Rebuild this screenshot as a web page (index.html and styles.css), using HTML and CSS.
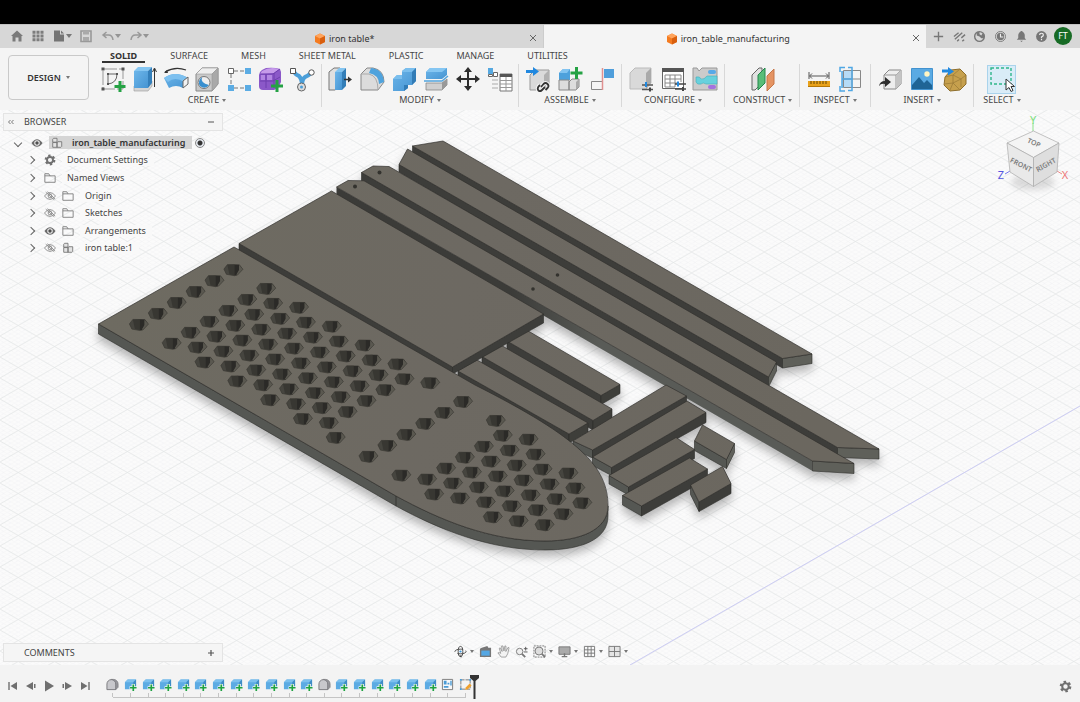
FILE: index.html
```html
<!DOCTYPE html>
<html lang="en">
<head>
<meta charset="utf-8">
<title>iron_table_manufacturing</title>
<link rel="stylesheet" href="styles.css">
</head>
<body>
<svg class="defs" aria-hidden="true">
  <defs>
    <linearGradient id="gBlue" x1="0" y1="0" x2="1" y2="1"><stop offset="0" stop-color="#6db6ea"/><stop offset="1" stop-color="#4594d2"/></linearGradient>
    <symbol id="cube" viewBox="0 0 12 12"><path d="M6 .5 11 3v6L6 11.500 1 9V3z" fill="#f47b20"/><path d="M6 .5 11 3 6 5.500 1 3z" fill="#ffa45c"/><path d="M6 5.500 11 3v6l-5 2.500z" fill="#d95f0e"/></symbol>
    <symbol id="body" viewBox="0 0 14 14"><path d="M1 12V4.500L4 1.500h9V9l-3 3z" fill="#5cabe3"/><path d="M1 4.500l3-3h9l-3 3z" fill="#7cc0ee"/><path d="M10 4.500l3-3V9l-3 3z" fill="#3f8cc6"/><path d="M10 6.500v7.500M6 10.500h8" stroke="#f4f4f4" stroke-width="3.500"/><path d="M10 7v7M6.500 10.500h7" stroke="#1fa342" stroke-width="1.800"/></symbol>
    <symbol id="base" viewBox="0 0 14 14"><path d="M5.500 1.500h2.500a5 5 0 0 1 5 5v3.500l-2.500 2.500z" fill="#99999e" stroke="#77777b" stroke-width=".8"/><path d="M1 12.500V6.500a4.700 4.700 0 0 1 9.500 0v6z" fill="#c8c8cc" stroke="#77777b"/></symbol>
    <symbol id="eye" viewBox="0 0 14 12"><path d="M.5 6q6.500-9 13 0-6.500 9-13 0z" fill="#6b6b6b"/><circle cx="7" cy="6" r="3.200" fill="#eee"/><circle cx="7" cy="6" r="2" fill="#505050"/></symbol>
    <symbol id="eye-off" viewBox="0 0 14 12"><path d="M.5 6q6.500-8 13 0-6.500 8-13 0zM2 1.500l10 9M4 1l9 8.500" fill="none" stroke="#858585"/><circle cx="7" cy="6" r="2.200" fill="none" stroke="#858585"/></symbol>
    <symbol id="folder" viewBox="0 0 14 12"><path d="M1 11V1h4.500l1.500 2.500H13V11zM1 3.500h6" fill="none" stroke="#777"/></symbol>
    <symbol id="component" viewBox="0 0 14 14"><path d="M2 2.500 3 1.500h4v4.500H2zM2 6.500h5V12H2zM7 7l1-1.500h4.500V11l-1 1H7z" fill="#e3e3e3" stroke="#747474"/></symbol>
    <symbol id="gear" viewBox="0 0 14 14"><circle cx="7" cy="7" r="5" fill="none" stroke="#707070" stroke-width="2.600" stroke-dasharray="2.620 2.620"/><circle cx="7" cy="7" r="3.500" fill="none" stroke="#707070" stroke-width="2.200"/></symbol>
  </defs>
</svg>
<div class="screen-edge"></div>
<div class="app">
  <header class="titlebar">
    <div class="quick">
      <button aria-label="Home"><svg viewBox="0 0 14 14"><path d="M1 7 7 1.500 13 7h-1.500v5.500h-3V8.500h-3v4h-3V7z" fill="#7a7a7a"/></svg></button>
      <button aria-label="Data panel"><svg viewBox="0 0 14 14"><path d="M1.500 3.200h3m1 0h3m1 0h3M1.500 7h3m1 0h3m1 0h3M1.500 10.800h3m1 0h3m1 0h3" stroke="#7d7d7d" stroke-width="3"/></svg></button>
      <button class="has-caret" aria-label="File"><svg viewBox="0 0 14 14"><path d="M2 1.500h6v4h4v7H2z" fill="#747474"/><path d="M9 1.500 12 4.500H9z" fill="#747474"/></svg></button>
      <button aria-label="Save"><svg viewBox="0 0 14 14"><path d="M2 2h10v10.500H2z" fill="none" stroke="#999" stroke-width="1.600"/><path d="M4 2h6v3.500H4zM4 8h6v4H4z" fill="#aaa"/></svg></button>
      <button class="has-caret light" aria-label="Undo"><svg viewBox="0 0 14 14"><path d="M5.500 3 2 6l3.500 3M2 6h5.500q4 0 4.500 5" fill="none" stroke="#999" stroke-width="1.500"/></svg></button>
      <button class="has-caret light" aria-label="Redo"><svg viewBox="0 0 14 14"><path d="M8.500 3 12 6 8.500 9M12 6H6.500Q2.500 6 2 11" fill="none" stroke="#999" stroke-width="1.500"/></svg></button>
    </div>
    <div class="doc"><span class="doc-title"><svg><use href="#cube"/></svg>iron table*</span><button class="close" aria-label="Close iron table"><svg viewBox="0 0 8 8"><path d="M1 1l6 6M7 1 1 7" stroke="#666"/></svg></button></div>
    <div class="doc active"><span class="doc-title"><svg><use href="#cube"/></svg>iron_table_manufacturing</span><button class="close" aria-label="Close iron_table_manufacturing"><svg viewBox="0 0 8 8"><path d="M1 1l6 6M7 1 1 7" stroke="#666"/></svg></button></div>
    <div class="account">
      <button aria-label="New tab"><svg viewBox="0 0 14 14"><path d="M7 2v10M2 7h10" stroke="#777" stroke-width="1.500"/></svg></button>
      <button aria-label="Connection"><svg viewBox="0 0 14 14"><path d="M1 7l5-4M2 10l8-7M4.500 12l2-1.700M9 8.500l4-3.500M10 12l2-1.500" stroke="#777" stroke-width="1.500"/></svg></button>
      <button aria-label="Extensions"><svg viewBox="0 0 14 14"><circle cx="7" cy="7" r="5.200" fill="none" stroke="#777" stroke-width="1.500"/><path d="M4 2h3v2.500l2 1.500 1-2 2.500 1L12 9H9L7 7 4 6z" fill="#777"/></svg></button>
      <button aria-label="Job status"><svg viewBox="0 0 14 14"><circle cx="7" cy="7" r="5.400" fill="#ddd" stroke="#777"/><circle cx="7" cy="7" r="4" fill="#777"/><path d="M7 4v3.500h3" fill="none" stroke="#eee" stroke-width="1.200"/></svg></button>
      <button aria-label="Notifications"><svg viewBox="0 0 14 14"><path d="M2 10.500 3.500 8.500V5Q4 2.500 6 2V1h2v1q2 .5 2.500 3v3.500L12 10.500zM5.500 11.500h3L7 13z" fill="#777"/></svg></button>
      <button aria-label="Help"><svg viewBox="0 0 14 14"><circle cx="7" cy="7" r="5.800" fill="#757575"/><path d="M5 5.500Q5 3.500 7 3.500t2 1.800Q9 6.500 7 7.500V8.500M7 9.500V11" fill="none" stroke="#eee" stroke-width="1.300"/></svg></button>
      <button class="avatar">FT</button>
    </div>
  </header>

  <section class="ribbon">
    <button class="workspace caret">DESIGN</button>
    <div class="ribbon-main">
      <nav class="tabs">
        <button class="current">SOLID</button><button>SURFACE</button><button>MESH</button><button>SHEET METAL</button><button>PLASTIC</button><button>MANAGE</button><button>UTILITIES</button>
      </nav>
      <div class="groups">
        <div class="group create">
          <div class="icons">
            <button aria-label="Create sketch"><svg viewBox="0 0 26 26"><path d="M3 3h20v20H3z" fill="none" stroke="#999" stroke-dasharray="14 2"/><path d="M8 8h9q0 9-9 10z" fill="none" stroke="#666"/><path d="M1.500 1.500h3v3h-3zM21.500 1.500h3v3h-3zM1.500 21.500h3v3h-3zM7 7h2v2H7zM16 7h2v2h-2zM7 17h2v2H7z" fill="#555"/><path d="M20 15v11M14.500 20.500h11" stroke="#25a244" stroke-width="3"/></svg></button>
            <button aria-label="Extrude"><svg viewBox="0 0 26 26"><path d="M3 20h14l4-5v5l-4 5H3z" fill="#d5d5d5" stroke="#999" stroke-width=".6"/><path d="M3 5h14v17H3z" fill="url(#gBlue)"/><path d="M3 5l4-4h14l-4 4z" fill="#85c6f2"/><path d="M17 5l4-4v16l-4 5z" fill="#347fba"/><path d="M23.500 21V3M21.500 6l2-4 2 4" fill="none" stroke="#333"/></svg></button>
            <button aria-label="Revolve"><svg viewBox="0 0 26 26"><path d="M2 6Q12 0 23 4" fill="none" stroke="#333" stroke-width="1.200"/><path d="M1 7l3-3 1 3z" fill="#333"/><path d="M1 12q11-8 24 0l-5 10q-7-4-14 0z" fill="url(#gBlue)"/><path d="M1 12q11-8 24 0l-4 4q-9-6-16 0z" fill="#7dc0ef"/><path d="M25 11v7l-5 4v-7z" fill="#f2f2f2" stroke="#666"/></svg></button>
            <button aria-label="Hole"><svg viewBox="0 0 26 26"><path d="M2 25V8l6-6h16v16l-6 7z" fill="#c9c9c9" stroke="#888"/><path d="M2 8l6-6h16l-6 6z" fill="#eee" stroke="#999" stroke-width=".6"/><path d="M18 8l6-6v16l-6 7z" fill="#a9a9a9" stroke="#999" stroke-width=".6"/><circle cx="10" cy="16.500" r="6" fill="#eee" stroke="#777"/><path d="M8 11q-2 6 7 8-4 5-9 1-3-5 2-9z" fill="#388fcf"/></svg></button>
            <button aria-label="Rectangular pattern"><svg viewBox="0 0 26 26"><path d="M8 5h11M5 8v11M8 22h11" fill="none" stroke="#777" stroke-dasharray="4 2"/><path d="M2.500 2.500h5v5h-5z" fill="#fff" stroke="#666"/><path d="M19 2h6v6h-6zM2 19h6v6H2zM19 19h6v6h-6z" fill="#5bace4"/></svg></button>
            <button aria-label="Create form"><svg viewBox="0 0 26 26"><path d="M2 9q0-3 3-5l4-2q8-1 14 1l1 3v10l-3 6-4 2H6q-4 0-4-4z" fill="#8b58c8"/><path d="M5 5q8-5 17-2l-5 4Q9 8 3 8z" fill="#c69bea"/><path d="M3 8h13l7-5M3 15h13l7-4M9 8v14M17 7v15" stroke="#6f3fae" fill="none"/><path d="M4 9h4v5H4zM10 9h5v5h-5z" fill="#b286e2"/><path d="M20 14v12M14 20h12" stroke="#25a244" stroke-width="3"/></svg></button>
            <button aria-label="Automated modeling"><svg viewBox="0 0 26 26"><path d="M4 5q3 4 6 5 3 3 3 10 0-7 3-9 3-1 6-4" fill="none" stroke="#4b9fd9" stroke-width="4"/><path d="M1.500 2.500h5v5h-5z" fill="#fff" stroke="#555"/><circle cx="22.500" cy="6.500" r="2.700" fill="#fff" stroke="#555"/><circle cx="12.500" cy="21" r="4" fill="#ddd" stroke="#666"/><circle cx="12.500" cy="21" r="1.500" fill="#4b9fd9"/></svg></button>
          </div>
          <button class="caret">CREATE</button>
        </div>
        <div class="group modify">
          <div class="icons">
            <button aria-label="Press pull"><svg viewBox="0 0 26 26"><path d="M2 24V6l5-4h6v18l-5 4z" fill="#e0e0e0" stroke="#777"/><path d="M8 6h7v18H8z" fill="url(#gBlue)"/><path d="M8 6l4-4h7l-4 4z" fill="#83c5f1"/><path d="M15 6l4-4v18l-4 4z" fill="#337eb8"/><path d="M17 13.500h5" stroke="#333" stroke-width="1.500"/><path d="M21 10.500l4 3-4 3z" fill="#333"/></svg></button>
            <button aria-label="Fillet"><svg viewBox="0 0 26 26"><path d="M2 24V8l6-6h6q11 2 11 14l-6 8z" fill="#dcdcdc" stroke="#888"/><path d="M2 8h8q9 2 9 16" fill="none" stroke="#aaa"/><path d="M12 2q12 1 13 14l-5 2Q20 9 10 7z" fill="#4fa3dd"/></svg></button>
            <button aria-label="Combine"><svg viewBox="0 0 26 26"><path d="M2 25V13l4-4h5V5l4-3h10v13l-4 4h-4v3l-4 3z" fill="url(#gBlue)"/><path d="M2 13l4-4h5v-4l4-3h10l-4 4H11v7z" fill="#7abeed"/><path d="M21 6l4-4v13l-4 4zM13 19h4v3l-4 3z" fill="#327cb6"/></svg></button>
            <button aria-label="Split body"><svg viewBox="0 0 26 26"><path d="M3 13V6l4-4h17v7l-5 4z" fill="url(#gBlue)"/><path d="M3 6l4-4h17l-5 4z" fill="#85c6f2"/><path d="M1 15h18l6-5" fill="none" stroke="#52a4dd" stroke-width="1.500"/><path d="M3 17h16l5-4v6l-5 5H3z" fill="#d0d0d0" stroke="#888" stroke-width=".8"/><path d="M19 17l5-4v6l-5 5z" fill="#999"/></svg></button>
            <button aria-label="Move"><svg viewBox="0 0 26 26"><path d="M13 4v18M4 13h18" stroke="#2e2e2e" stroke-width="2"/><path d="M13 1l4 5H9zM13 25l4-5H9zM1 13l5-4v8zM25 13l-5-4v8z" fill="#2e2e2e"/></svg></button>
            <button aria-label="Change parameters"><svg viewBox="0 0 26 26"><path d="M1 2h5v6H1z" fill="#55a8e0"/><path d="M6.500 6.500h4v4h-4zM1.500 8.500h4v2h-4z" fill="#fff" stroke="#666"/><path d="M5 14h6M5 18h6M5 22h6" stroke="#aaa"/><path d="M13 8h12v17H13z" fill="#fff" stroke="#777"/><path d="M13 8h12v3H13z" fill="#555"/><path d="M13 14.500h12M13 18h12M13 21.500h12M19 11v14" stroke="#999"/></svg></button>
          </div>
          <button class="caret">MODIFY</button>
        </div>
        <div class="group">
          <div class="icons">
            <button aria-label="Insert derive"><svg viewBox="0 0 26 26"><path d="M5 24V9l5-5h14v14l-5 6z" fill="#dadada" stroke="#999"/><path d="M19 9l5-5v14l-5 6z" fill="#b1b1b1"/><path d="M1 5.500h8" stroke="#2188df" stroke-width="3"/><path d="M8 1l6 4.500L8 10z" fill="#2188df"/><path d="M16 21l2.500-3q2-2 4 0t0 4l-2 2M20 21l-3 3q-2 2-3.500.500t0-4l1.500-1.500" fill="none" stroke="#f4f4f4" stroke-width="4"/><path d="M16 21l2.500-3q2-2 4 0t0 4l-2 2M20 21l-3 3q-2 2-3.500.500t0-4l1.500-1.500" fill="none" stroke="#333" stroke-width="1.800"/></svg></button>
            <button aria-label="New component"><svg viewBox="0 0 26 26"><path d="M2 14V7l4-4h7v11z" fill="#4da1dc"/><path d="M2 7l4-4h7l-3 4z" fill="#82c4f1"/><path d="M2 14h10v10H2zM12 16l3-3h7v8l-3 3h-7z" fill="#ddd" stroke="#888"/><path d="M19 16l3-3v8l-3 3z" fill="#aaa"/><path d="M19.500 1v12M13.500 7h12" stroke="#25a244" stroke-width="3"/></svg></button>
            <button aria-label="Joint"><svg viewBox="0 0 26 26"><path d="M2.500 15.500h11v8h-11z" fill="#f5f5f5" stroke="#888"/><path d="M15 3h10v9H15z" fill="#4f9edb"/><path d="M13.500 2v22" stroke="#e09090" stroke-width="1.500"/></svg></button>
          </div>
          <button class="caret">ASSEMBLE</button>
        </div>
        <div class="group">
          <div class="icons">
            <button aria-label="Configure model"><svg viewBox="0 0 26 26"><path d="M2 23V7l5-5h16v15l-5 6z" fill="#d9d9d9" stroke="#bbb"/><path d="M18 7l5-5v15l-5 6z" fill="#aaa"/><path d="M14 19h11M14 23.500h11" stroke="#555" stroke-width="1.300"/><path d="M18 16v5" stroke="#2188df" stroke-width="2"/><path d="M22 21.500v4" stroke="#444" stroke-width="2"/></svg></button>
            <button aria-label="Configuration table"><svg viewBox="0 0 26 26"><path d="M2.500 2.500h21v20h-21z" fill="#fff" stroke="#666"/><path d="M2 2h22v4H2z" fill="#555"/><path d="M5 9h16M5 13h16M5 17h12M5 21h10M5 9v12M10 9v12M15 9v12M21 9v7" stroke="#888"/><path d="M15 18h11M15 23h11" stroke="#444" stroke-width="1.300"/><path d="M18 15.500v5" stroke="#2188df" stroke-width="2"/><path d="M23 21v4" stroke="#444" stroke-width="2"/></svg></button>
            <button aria-label="Configuration rules"><svg viewBox="0 0 26 26"><path d="M1 2h4l2 3 3-3h15v22H1z" fill="#cbcbcb" stroke="#999"/><path d="M4 11q4-1 5 2 3 1 6-3h10v8H14q-3-2-5 0-4 1-5-2z" fill="#67d1dd" stroke="#45aeba" stroke-width=".6"/><rect x="16" y="4" width="8" height="4" rx="2" fill="#57a9e8"/><rect x="16" y="19" width="8" height="4" rx="2" fill="#a473df"/></svg></button>
          </div>
          <button class="caret">CONFIGURE</button>
        </div>
        <div class="group construct">
          <div class="icons">
            <button aria-label="Offset plane"><svg viewBox="0 0 26 26"><path d="M2 24V9l7-7h3v15l-7 7z" fill="#e1e1e1" stroke="#666"/><path d="M8 9l7-7v15l-7 7z" fill="#58bd78" stroke="#23864b"/><path d="M17 10l7-7v15l-7 7z" fill="#e59463" stroke="#c57748"/></svg></button>
          </div>
          <button class="caret">CONSTRUCT</button>
        </div>
        <div class="group">
          <div class="icons">
            <button aria-label="Measure"><svg viewBox="0 0 26 26"><path d="M3 6v7M23 6v7M4 10h18M6 7.500 3.500 10 6 12.500M20 7.500l2.500 2.500-2.500 2.500" fill="none" stroke="#555"/><path d="M2 15h22v6H2z" fill="#e9a21b"/><path d="M5 15v3M8 15v3M11 15v3M14 15v3M17 15v3M20 15v3" stroke="#674600"/><path d="M2 20.500h22" stroke="#b67705"/></svg></button>
            <button aria-label="Section analysis"><svg viewBox="0 0 26 26"><path d="M4 5h9v17H4z" fill="#b6dbf6"/><path d="M5.500 4.500h17v17h-17zM5 13h18M14 4v18" fill="none" stroke="#888"/><path d="M7 1.500H2V6M2 20v5h5M10 1.500h4v23h-4M4 13h10M4 5v17" fill="none" stroke="#4fa7e4" stroke-width="1.500"/></svg></button>
          </div>
          <button class="caret">INSPECT</button>
        </div>
        <div class="group">
          <div class="icons">
            <button aria-label="Insert component"><svg viewBox="0 0 26 26"><path d="M7 23V9l5-5h12v14l-5 5z" fill="#eee" stroke="#888"/><path d="M7 9h12v14M19 9l5-5" fill="none" stroke="#999"/><path d="M19 9l5-5v14l-5 5z" fill="#c4c4c4"/><path d="M2 20q1-5 6-5v-4l6 5-6 5v-3q-4-1-6 2z" fill="#2e2e2e"/></svg></button>
            <button aria-label="Insert image"><svg viewBox="0 0 26 26"><path d="M2.500 2.500h21v21h-21z" fill="#5aaae3" stroke="#4292cf"/><path d="M3 19l7-8 5 6 3-3 5 5v4H3z" fill="#1f6495"/><circle cx="18" cy="8" r="2.700" fill="#fff5c3"/></svg></button>
            <button aria-label="Insert mesh"><svg viewBox="0 0 26 26"><path d="M4 11l6-7 9-1 6 6v9l-6 6-10 1-6-6z" fill="#c6a04d" stroke="#8d6d2b"/><path d="M4 11l8-2 7-6M12 9l8 4 5-4M12 9v8l8-4v8M3 18l9-1 7 7M12 17l-3 7" fill="none" stroke="#9d7c38" stroke-width=".8"/><path d="M1 5h7" stroke="#2188df" stroke-width="3"/><path d="M7 1l6 4.500-6 4z" fill="#2188df"/></svg></button>
          </div>
          <button class="caret">INSERT</button>
        </div>
        <div class="group select">
          <div class="icons">
            <button class="pressed" aria-label="Select"><svg viewBox="0 0 26 26"><path d="M2 2h20v16H2z" fill="none" stroke="#2fb68b" stroke-width="1.400" stroke-dasharray="3 2"/><path d="M17 13v11l3-2.500 2 4 2-1-2-4h3.500z" fill="#fff" stroke="#333"/></svg></button>
          </div>
          <button class="caret">SELECT</button>
        </div>
      </div>
    </div>
  </section>

  <main class="canvas">
    <svg class="scene" viewBox="0 110 1080 555" preserveAspectRatio="xMidYMid slice" role="img" aria-label="Flat arrangement of table parts">
      <defs>
        <pattern id="minor" width="7.280" height="4.200" patternUnits="userSpaceOnUse"><path d="M0 0l7.280 4.200M0 4.200 7.280 0" stroke="#f1f1f2" stroke-width=".5"/></pattern>
        <pattern id="major" width="36.400" height="21" patternUnits="userSpaceOnUse"><path d="M0 0l36.400 21M0 21 36.400 0" stroke="#e3e5e6" stroke-width=".7"/></pattern>
        <linearGradient id="edgeA" gradientUnits="userSpaceOnUse" x1="510" y1="0" x2="600" y2="0"><stop offset="0" stop-color="#3b3b38"/><stop offset="1" stop-color="#595b57"/></linearGradient>
        <linearGradient id="topFace" gradientUnits="userSpaceOnUse" x1="100" y1="250" x2="800" y2="450"><stop offset="0" stop-color="#6e6b61"/><stop offset=".5" stop-color="#6d6962"/><stop offset="1" stop-color="#6b675f"/></linearGradient>
        <g id="hole"><path d="M-9.500-1-6-5.500 6-5.300 9.500-.8 4 5 1 5.600-7 4.200z" fill="#46453f" stroke="#35342f" stroke-width=".6"/><path d="M-6-5.200 1-5.600v10.800l-5-1z" fill="#383732"/><path d="M1-5.400 5.600-5.200V.8L3 5 1 5.200z" fill="#2b2a27"/><path d="M5.600-5 9.200-.8 4 4.700 3 4.500 5.600 0z" fill="#5a5850"/></g>
      </defs>
      <rect y="100" width="1080" height="575" fill="#fbfbfb"/>
      <rect y="100" width="1080" height="575" fill="url(#minor)"/>
      <rect y="100" width="1080" height="575" fill="url(#major)"/>
      <path d="M630 665 1080 406" stroke="#cdcdf4" fill="none"/>
      <g class="parts">
        <g class="beam">
          <path class="dark" d="M412.500 146 782.500 358.500v9.500L412.500 155z"/><path class="end" d="M782.500 358.500 812 354v9.500l-29.500 4.500z"/><path class="top" d="M412.500 146 443 141 812 354l-29.500 4.500z"/>
          <path class="dark" d="M399 164.500 768.500 377v10L399 172z"/><path class="end" d="M768.500 377l8-15v9l-8 16z"/><path class="top" d="M399 164.500 407.500 149l369 213-8 15z"/>
          <path class="dark" d="M361.500 172.500 837.500 447.500v9.500L361.500 182z"/><path class="end" d="M837.500 447.500l41.500 1.500v10l-41.500-1.500z"/><path class="top" d="M361.500 172.500 373 166l16 .5L879 449l-41.500-1.500z"/>
          <path fill="url(#edgeA)" d="M336.500 187 812.500 461v10L336.500 196z"/><path class="end" d="M812.500 461l41.500 2.500v10L812.500 471z"/><path class="top" d="M336.500 187 348 180.500l16 .3L854 463.500 812.500 461z"/>
        </g>
        <g>
          <path class="dark" d="M507 341l94 54.500v9L507 350z"/><path class="side" d="M601 395.500l19-11v9l-19 11z"/><path class="top" d="M507 341l19.500-11L620 384.500l-19 11z"/>
          <path class="dark" d="M482 356.500l111 64v9.500L482 366z"/><path class="side" d="M593 420.500l19-11.500v9l-19 12z"/><path class="top" d="M482 356.500 501.500 345.500 612 409l-19 11.500z"/>
          <path class="dark" d="M458 371l111 63v9L458 379z"/><path class="side" d="M569 434l19-11v9l-19 11z"/><path class="top" d="M458 371l19-11L588 423l-19 11z"/>
          <path class="front" d="M573 441l19.500 9v8L573 449z"/><path class="dark" d="M592.500 450l94-54v8l-94 54z"/><path class="top" d="M573 441l93-56 20.500 11-94 54z"/>
          <path class="front" d="M592.500 457l19 10.500v8l-19-10z"/><path class="dark" d="M611.500 467.500 706 412.500v10l-94.500 53z"/><path class="top" d="M592.500 457 687 401l19 11.500-94.500 55z"/>
          <path class="front" d="M609 475.500 628.500 487v8L609 484z"/><path class="dark" d="M628.500 487l66-37.500v9l-66 36.500z"/><path class="top" d="M609 475.500 676 437.500l18.500 12-66 37.500z"/>
          <path class="front" d="M622.500 495.500 641.500 506v10l-19-11z"/><path class="dark" d="M641.500 506l66-37v10l-66 37z"/><path class="top" d="M622.500 495.500 689.500 458l18 11-66 37z"/>
          <path class="front" d="M694.500 441l32 18.500v9l-32-18z"/><path class="end" d="M726.500 459.500l8-16v9l-8 16z"/><path class="top" d="M702.500 425l32 18.500-8 16-32-18.500z"/>
          <path class="front" d="M690.500 485l8.500 17v9.500l-8.500-17z"/><path class="dark" d="M699 502l32-18.500v10L699 511.500z"/><path class="top" d="M722.500 466.500l8.500 17L699 502l-8.500-17z"/>
        </g>
        <path class="dark" d="M239 243.500 452.500 367v7L239 251z"/><path class="dark" d="M452.500 367l91-53v9l-91 51z"/><path class="top" d="M239 243.500 331.500 191l212 123-91 53z"/>
        <path class="front" d="M98.500 324 396 496C440 520 490 541 545 541 580 541 608 530 608 506v10C608 540 580 550 545 550 490 550 440 530 396 506L98.500 334z"/>
        <path class="top" d="M98.500 324 234 247 475 385C580 438 608 467 608 506 608 530 580 541 545 541 490 541 440 520 396 496z"/>
        <path d="M396 496v10" stroke="#2d2d2b" stroke-width=".8"/>
        <g fill="#33322e"><circle cx="355" cy="186.500" r="2"/><circle cx="379.500" cy="172.500" r="2"/><circle cx="533" cy="289" r="1.800"/><circle cx="557.500" cy="275" r="1.800"/></g>
        <g id="holes"></g>
      </g>
    </svg>

    <aside class="browser">
      <h2 class="panel-head"><button aria-label="Collapse browser"><svg viewBox="0 0 8 8"><path d="M3.500 2 1.500 4l2 2M6.500 2l-2 2 2 2" fill="none" stroke="#777"/></svg></button><span>BROWSER</span><button aria-label="Minimize"><svg viewBox="0 0 8 8"><path d="M1 4h6" stroke="#555"/></svg></button></h2>
      <ul class="tree">
        <li class="root"><button class="chev open" aria-label="Collapse"></button><svg><use href="#eye"/></svg><span class="picked"><svg><use href="#component"/></svg><b>iron_table_manufacturing</b></span><input type="radio" checked aria-label="Activate component"></li>
        <li><button class="chev" aria-label="Expand"></button><svg><use href="#gear"/></svg><span class="label">Document Settings</span></li>
        <li><button class="chev" aria-label="Expand"></button><svg><use href="#folder"/></svg><span class="label">Named Views</span></li>
        <li><button class="chev" aria-label="Expand"></button><svg><use href="#eye-off"/></svg><svg><use href="#folder"/></svg><span class="label">Origin</span></li>
        <li><button class="chev" aria-label="Expand"></button><svg><use href="#eye-off"/></svg><svg><use href="#folder"/></svg><span class="label">Sketches</span></li>
        <li><button class="chev" aria-label="Expand"></button><svg><use href="#eye"/></svg><svg><use href="#folder"/></svg><span class="label">Arrangements</span></li>
        <li><button class="chev" aria-label="Expand"></button><svg><use href="#eye-off"/></svg><svg><use href="#component"/></svg><span class="label">iron table:1</span></li>
      </ul>
    </aside>

    <svg class="viewcube" viewBox="0 0 84 84" role="img" aria-label="View cube">
      <ellipse cx="41" cy="70" rx="22" ry="8" fill="#000" opacity=".12" class="soft"/>
      <path d="M41 19V11" stroke="#8be38b"/><path d="M18 59l-5 3" stroke="#7777ef"/><path d="M65 59l5 3" stroke="#ef8888"/>
      <path d="M15 31 41.500 19 67 31 41.500 45.500z" fill="#f4f4f4" stroke="#aaa" stroke-width=".7"/>
      <path d="M15 31l26.500 14.500v29L18 60z" fill="#e9e9e9" stroke="#aaa" stroke-width=".7"/>
      <path d="M67 31 41.500 45.500v29L65 60z" fill="#dedede" stroke="#aaa" stroke-width=".7"/>
      <g class="face"><text transform="translate(41 33) rotate(24)">TOP</text><text transform="translate(28 55) rotate(27)">FRONT</text><text transform="translate(55 55) rotate(-29)">RIGHT</text></g>
      <g class="axis"><text x="41" y="12" fill="#7be07b">Y</text><text x="9" y="67" fill="#5555e0">Z</text><text x="73" y="67" fill="#ee7777">X</text></g>
    </svg>

    <section class="comments panel-head"><span>COMMENTS</span><button aria-label="Add comment"><svg viewBox="0 0 8 8"><path d="M1 4h6M4 1v6" stroke="#555" stroke-width="1.200"/></svg></button></section>

    <div class="navbar">
      <button class="has-caret" aria-label="Orbit"><svg viewBox="0 0 14 14"><ellipse cx="7" cy="7" rx="2.500" ry="5.500" fill="none" stroke="#444"/><ellipse cx="7" cy="7" rx="6" ry="2.500" fill="none" stroke="#444" stroke-dasharray="10 3"/><path d="M5.500 11.500 8 11v2.500z" fill="#333"/><circle cx="7" cy="7" r="1.200" fill="#3b96dc"/></svg></button>
      <button aria-label="Look at"><svg viewBox="0 0 14 14"><path d="M1 4l2-1 6-2 1 2h3v10H1z" fill="#777"/><path d="M2.500 6h9v5.500h-9z" fill="#54a7e4"/></svg></button>
      <button aria-label="Pan"><svg viewBox="0 0 14 14"><path d="M4.500 13 1 8.500q.5-1 3 .5L2.500 3.500l1-.5L5.500 7 5 1h1.400L7.500 6.500 8.500 1l1.200.2L9.500 7 12 2.500l1 .5L11.500 9.500l-2 3.500z" fill="#f3f3f3" stroke="#8a8a8a" stroke-width=".8"/></svg></button>
      <button aria-label="Zoom"><svg viewBox="0 0 14 14"><circle cx="5" cy="7" r="3.500" fill="#eee" stroke="#777"/><path d="M7.500 9.500 11 13" stroke="#777" stroke-width="2"/><path d="M9.500 4h4M11.500 2v4M9.500 7.500h4" stroke="#555"/></svg></button>
      <button class="has-caret" aria-label="Fit"><svg viewBox="0 0 14 14"><path d="M1 1h12v12H1z" fill="none" stroke="#777" stroke-dasharray="2 1"/><circle cx="6.500" cy="6.500" r="4.300" fill="#ddd" stroke="#777"/><path d="M9.500 9.500 13 13" stroke="#777" stroke-width="1.800"/></svg></button>
      <button class="has-caret" aria-label="Display settings"><svg viewBox="0 0 14 14"><path d="M1 2h12v8H1z" fill="#aaa" stroke="#777"/><path d="M4 12.500h6M7 9v3" stroke="#777" stroke-width="1.500"/></svg></button>
      <button class="has-caret" aria-label="Grid settings"><svg viewBox="0 0 14 14"><path d="M1.500 1.500h11v11h-11zM5.200 1.500v11M8.800 1.500v11M1.500 5.200h11M1.500 8.800h11" fill="none" stroke="#777"/></svg></button>
      <button class="has-caret" aria-label="Viewports"><svg viewBox="0 0 14 14"><path d="M1 1.500h12v11H1zM7 1.500v11M1 7h12" fill="#e4e4e4" stroke="#777"/></svg></button>
    </div>
  </main>

  <footer class="timeline">
    <div class="play">
      <button aria-label="Go to start"><svg viewBox="0 0 12 12"><path d="M2 2v8" stroke="#6f6f6f" stroke-width="1.400"/><path d="M10 2v8L3.500 6z" fill="#6f6f6f"/></svg></button>
      <button aria-label="Step back"><svg viewBox="0 0 12 12"><path d="M8 2v8L1 6zM9 4h1.500v4H9z" fill="#6f6f6f"/></svg></button>
      <button aria-label="Play"><svg viewBox="0 0 12 12"><path d="M2 .5v11L11 6z" fill="#6f6f6f"/></svg></button>
      <button aria-label="Step forward"><svg viewBox="0 0 12 12"><path d="M4 2v8l7-4zM1.500 4H3v4H1.500z" fill="#6f6f6f"/></svg></button>
      <button aria-label="Go to end"><svg viewBox="0 0 12 12"><path d="M10 2v8" stroke="#6f6f6f" stroke-width="1.400"/><path d="M2 2v8l6.500-4z" fill="#6f6f6f"/></svg></button>
    </div>
    <div class="features">
      <button aria-label="Base feature"><svg><use href="#base"/></svg></button>
      <button aria-label="Body 1"><svg><use href="#body"/></svg></button>
      <button aria-label="Body 2"><svg><use href="#body"/></svg></button>
      <button aria-label="Body 3"><svg><use href="#body"/></svg></button>
      <button aria-label="Body 4"><svg><use href="#body"/></svg></button>
      <button aria-label="Body 5"><svg><use href="#body"/></svg></button>
      <button aria-label="Body 6"><svg><use href="#body"/></svg></button>
      <button aria-label="Body 7"><svg><use href="#body"/></svg></button>
      <button aria-label="Body 8"><svg><use href="#body"/></svg></button>
      <button aria-label="Body 9"><svg><use href="#body"/></svg></button>
      <button aria-label="Body 10"><svg><use href="#body"/></svg></button>
      <button aria-label="Body 11"><svg><use href="#body"/></svg></button>
      <button aria-label="Base feature 2"><svg><use href="#base"/></svg></button>
      <button aria-label="Body 12"><svg><use href="#body"/></svg></button>
      <button aria-label="Body 13"><svg><use href="#body"/></svg></button>
      <button aria-label="Body 14"><svg><use href="#body"/></svg></button>
      <button aria-label="Body 15"><svg><use href="#body"/></svg></button>
      <button aria-label="Body 16"><svg><use href="#body"/></svg></button>
      <button aria-label="Body 17"><svg><use href="#body"/></svg></button>
      <button aria-label="Arrange"><svg viewBox="0 0 14 14"><path d="M1.500 1.500h11v11h-11z" fill="#f8f8f8" stroke="#777"/><path d="M3 3h3v4H3zM7 5h2v2H7zM10 3h1.500v5H10zM3 8.500h5v2H3z" fill="#4a9bd5"/></svg></button>
      <button aria-label="Sketch"><svg viewBox="0 0 14 14"><path d="M2 2h10v10H2z" fill="none" stroke="#777" stroke-dasharray="4 1"/><path d="M1 1h2v2H1zM11 1h2v2h-2zM1 11h2v2H1z" fill="#4a9bd5"/><path d="M6.500 13l1-3 4-4 2 2-4 4z" fill="#f0a02c"/></svg></button>
    </div>
    <svg class="marker" viewBox="0 0 9 24"><path d="M0 0h9v3L5.500 6v18h-2V6L0 3z" fill="#333"/></svg>
    <button class="settings" aria-label="Settings"><svg><use href="#gear"/></svg></button>
  </footer>
</div>
<script src="holes.js"></script>
</body>
</html>
```
FILE: styles.css
```css
* { box-sizing: border-box; }
body { margin: 0; font: 9px/12px "Noto Sans", "Open Sans", sans-serif; color: #444; background: #f4f4f4; }
button { border: 0; padding: 0; margin: 0; background: none; font: inherit; color: inherit; display: inline-flex; align-items: center; justify-content: center; }
svg { display: block; flex: none; }
.defs { position: absolute; width: 0; height: 0; }
body { display: flex; flex-direction: column; min-height: 100vh; }
.screen-edge { height: 24px; background: #000; flex: none; }
.app { flex: 1; display: flex; flex-direction: column; }

.titlebar { display: flex; height: 24px; background: #d7d7d7; border-top: 1px solid #c2c2c2; }
.quick { width: 160px; padding: 0 0 1px 10px; display: flex; align-items: center; gap: 7px; }
.quick svg { width: 14px; height: 14px; }
.has-caret::after, .caret::after { content: ""; border: 3px solid transparent; border-top: 4px solid #777; border-bottom: 0; margin-left: 3px; }
.quick .has-caret::after { margin-left: 0; }
.light::after { opacity: .7; }
.quick .light { margin-left: 1px; }
.doc { flex: 1; display: flex; align-items: center; padding: 4px 6px 0 0; color: #333; }
.doc .close { padding-bottom: 1px; }
.doc.active { background: #f4f4f4; border-left: 1px solid #ccc; }
.doc-title { flex: 1; display: flex; align-items: center; justify-content: center; gap: 3px; }
.doc-title svg { width: 12px; height: 12px; }
.close svg { width: 8px; height: 8px; }
.account { width: 154px; padding: 0 8px 1px 2px; display: flex; align-items: center; }
.account button { flex: 1; }
.account svg { width: 13px; height: 13px; }
.account .avatar { flex: none; width: 18px; height: 18px; border-radius: 50%; background: #176b25; color: #fff; margin-left: 2px; }

.ribbon { display: flex; height: 62px; background: #f4f4f4; padding-left: 8px; }
.workspace { width: 81px; height: 45px; margin: 7px 8px 0 0; border: 1px solid #c9c9c9; border-radius: 4px; font-weight: 600; color: #333; }
.ribbon .workspace::after { margin-left: 5px; }
.ribbon-main { flex: 1; }
.tabs { display: flex; gap: 17px; padding-left: 5px; height: 16px; }
.tabs button { padding: 2px 8px 0; height: 15px; border-bottom: 2px solid transparent; }
.tabs .current { font-weight: 700; border-color: #333; color: #333; }
.groups { display: flex; }
.group { padding: 0 3px; border-right: 1px solid #d8d8d8; display: flex; flex-direction: column; align-items: center; height: 43px; }
.group .caret::after, .workspace::after { border-width: 3px 2px 0; }
.icons { display: flex; height: 30px; align-items: center; }
.icons button { width: 32px; height: 30px; }
.icons svg { width: 26px; height: 26px; }
.create { width: 225px; padding: 0 4px 0 0; }
.create .icons { width: 100%; justify-content: space-between; }
.create .icons button { width: 31px; }
.modify { padding: 0 2px; }
.construct { padding: 0 7px 0 8px; }
.select { border: 0; padding: 0 9px; }
.icons .pressed { width: 29px; height: 29px; background: #d9ecf7; border: 1px solid #a9d3ec; }

.canvas { flex: 1; position: relative; display: flex; flex-direction: column; padding: 3px; min-height: 555px; }
.scene { position: absolute; inset: 0; width: 100%; height: 100%; }
.parts { filter: drop-shadow(0 6px 5px rgba(0, 0, 0, .28)); stroke-linejoin: round; }
.top { fill: url(#topFace); stroke: #302f2c; stroke-width: .7; }
.dark { fill: #3d3d3a; stroke: #2b2b29; stroke-width: .6; }
.side { fill: #3e3e3a; stroke: #2b2b29; stroke-width: .6; }
.front { fill: #555753; stroke: #2b2b29; stroke-width: .6; }
.end { fill: #5f605a; stroke: #2b2b29; stroke-width: .6; }

.browser { position: relative; width: 220px; }
.panel-head { margin: 0; width: 220px; height: 18px; display: flex; align-items: center; padding: 0 6px 0 2px; background: #f5f5f5; border: 1px solid #e4e4e4; font-size: 9px; font-weight: 400; }
.panel-head span { flex: 1; padding-left: 8px; }
.panel-head button { width: 10px; }
.panel-head svg { width: 8px; height: 8px; }
.tree { list-style: none; margin: 3px 0 0; padding: 0; height: 123px; display: flex; flex-direction: column; }
.tree li { flex: 1; display: flex; align-items: center; padding-left: 22px; }
.tree .root { padding-left: 9px; }
.tree svg { width: 12px; height: 12px; margin-right: 6px; }
.tree .chev { width: 12px; height: 12px; margin-right: 7px; }
.chev::before { content: ""; width: 5px; height: 5px; border: solid #666; border-width: 1px 1px 0 0; transform: rotate(45deg); }
.chev.open::before { transform: rotate(135deg); }
.label { background: #f9f9f9; padding: 0 6px 0 5px; }
.picked { display: flex; align-items: center; height: 13px; background: #d5d5d5; padding: 0 7px 0 2px; }
.picked b { padding-left: 3px; font-weight: 600; color: #333; }
.tree input { appearance: none; width: 10px; height: 10px; margin: 0 0 0 3px; border: 1px solid #888; border-radius: 50%; background: radial-gradient(#333 0 2px, #e6eaf0 3px); }

.viewcube { position: absolute; top: 2px; right: 4px; width: 84px; height: 84px; }
.soft { filter: blur(3px); }
.viewcube text { text-anchor: middle; }
.face { font-size: 7px; fill: #7d7d7d; font-weight: 600; }
.axis { font-size: 11px; }
.comments { position: relative; margin-top: auto; height: 19px; padding-left: 12px; }
.navbar { position: absolute; left: 42%; bottom: 5px; height: 17px; display: flex; align-items: center; gap: 5px; }
.navbar svg { width: 13px; height: 13px; }
.navbar .has-caret::after { border-width: 3px 2px 0; margin-left: 3px; }

.timeline { height: 37px; display: flex; background: #f3f3f3; padding: 10px 8px 0 7px; }
.play { width: 97px; height: 22px; display: flex; gap: 6px; align-items: center; }
.play svg { width: 12px; height: 12px; }
.features { width: 370px; height: 24px; display: flex; align-items: flex-start; background: linear-gradient(#c4c4c4, #c4c4c4) 9px 22px / 353px 1px no-repeat; }
.features button { flex: 1; height: 22px; padding-top: 3px; align-items: flex-start; background: linear-gradient(#c4c4c4, #c4c4c4) 50% 100% / 1px 4px no-repeat; }
.features svg { width: 13px; height: 13px; }
.marker { width: 9px; height: 24px; margin-left: -4px; }
.settings { margin-left: auto; height: 22px; }
.settings svg { width: 13px; height: 13px; }
```
FILE: holes.js
```javascript
// Hexagonal drill pattern: [column, first row, last row]
const columns = [
  [-2, 1, 6], [0, 0, 5], [1, 0, 4], [2, -1, 4], [3, -1, 3], [4, -2, 3],
  [5, -2, 2], [6, -3, 2], [7, -3, 1], [8, -4, 1], [9, -4, 0],
  [10, -5, -5], [10, 0, 0], [12, -6, -1], [14, -7, -7], [14, -2, -2],
  [15, -7, -3], [16, -8, -3], [17, -8, -4], [18, -8, -5], [19, -9, -5],
  [20, -9, -6], [21, -9, -7]
];
const layer = document.getElementById('holes');
for (const [col, first, last] of columns) {
  for (let row = first; row <= last; row++) {
    const use = document.createElementNS('http://www.w3.org/2000/svg', 'use');
    use.setAttribute('href', '#hole');
    use.setAttribute('x', (171.7 + row * 18.9 + col * 25.85).toFixed(1));
    use.setAttribute('y', (343.7 - row * 10.95 + col * 3.95).toFixed(1));
    layer.appendChild(use);
  }
}
```
